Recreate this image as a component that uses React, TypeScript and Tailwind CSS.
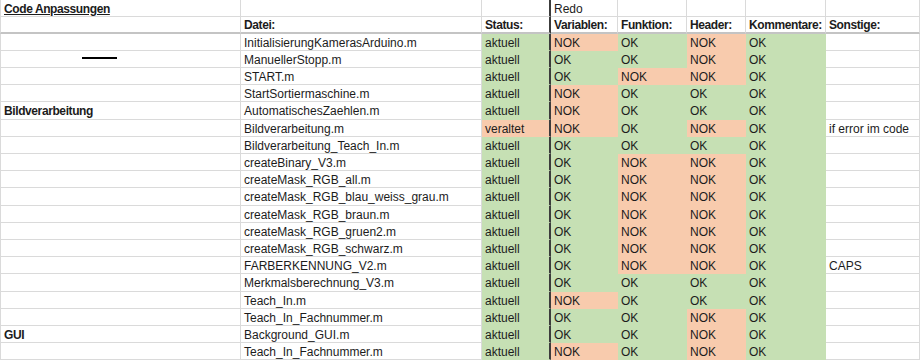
import React from "react";

type Fill = "g" | "o" | null;

type Row = {
  group?: string;
  file: string;
  status: string;
  vals: [string, string, string, string];
  note?: string;
};

const rows: Row[] = [
  { file: "InitialisierungKamerasArduino.m", status: "aktuell", vals: ["NOK", "OK", "NOK", "OK"] },
  { file: "ManuellerStopp.m", status: "aktuell", vals: ["OK", "OK", "NOK", "OK"] },
  { file: "START.m", status: "aktuell", vals: ["OK", "NOK", "NOK", "OK"] },
  { file: "StartSortiermaschine.m", status: "aktuell", vals: ["NOK", "OK", "OK", "OK"] },
  { group: "Bildverarbeitung", file: "AutomatischesZaehlen.m", status: "aktuell", vals: ["NOK", "OK", "OK", "OK"] },
  { file: "Bildverarbeitung.m", status: "veraltet", vals: ["NOK", "OK", "NOK", "OK"], note: "if error im code" },
  { file: "Bildverarbeitung_Teach_In.m", status: "aktuell", vals: ["OK", "OK", "OK", "OK"] },
  { file: "createBinary_V3.m", status: "aktuell", vals: ["OK", "NOK", "NOK", "OK"] },
  { file: "createMask_RGB_all.m", status: "aktuell", vals: ["OK", "NOK", "NOK", "OK"] },
  { file: "createMask_RGB_blau_weiss_grau.m", status: "aktuell", vals: ["OK", "NOK", "NOK", "OK"] },
  { file: "createMask_RGB_braun.m", status: "aktuell", vals: ["OK", "NOK", "NOK", "OK"] },
  { file: "createMask_RGB_gruen2.m", status: "aktuell", vals: ["OK", "NOK", "NOK", "OK"] },
  { file: "createMask_RGB_schwarz.m", status: "aktuell", vals: ["OK", "NOK", "NOK", "OK"] },
  { file: "FARBERKENNUNG_V2.m", status: "aktuell", vals: ["OK", "NOK", "NOK", "OK"], note: "CAPS" },
  { file: "Merkmalsberechnung_V3.m", status: "aktuell", vals: ["OK", "OK", "OK", "OK"] },
  { file: "Teach_In.m", status: "aktuell", vals: ["NOK", "OK", "OK", "OK"] },
  { file: "Teach_In_Fachnummer.m", status: "aktuell", vals: ["OK", "OK", "NOK", "OK"] },
  { group: "GUI", file: "Background_GUI.m", status: "aktuell", vals: ["OK", "OK", "NOK", "OK"] },
  { file: "Teach_In_Fachnummer.m", status: "aktuell", vals: ["NOK", "OK", "NOK", "OK"] },
];

// Spaltenbreiten A..H
const W = ["w-[241px]", "w-[241px]", "w-[69px]", "w-[67px]", "w-[69px]", "w-[59px]", "w-[80px]", "w-[94px]"];

function Cell({
  w,
  fill = null,
  bold,
  children,
  className = "",
}: {
  w: string;
  fill?: Fill;
  bold?: boolean;
  children?: React.ReactNode;
  className?: string;
}) {
  const bg =
    fill === "g"
      ? "bg-[#c6e0b4] border-[#c6e0b4]"
      : fill === "o"
      ? "bg-[#f8cbad] border-[#f8cbad]"
      : "bg-white border-[#dadada]";
  return (
    <div
      className={`${w} ${bg} shrink-0 h-full border-r border-b flex items-center pl-[3px] pt-[1px] whitespace-nowrap overflow-hidden ${
        bold ? "font-bold tracking-[-0.4px]" : ""
      } ${className}`}
    >
      {children}
    </div>
  );
}

export default function App() {
  return (
    <div
      className="relative w-[920px] h-[361px] overflow-hidden bg-white text-[12px] text-[#1c1c1c]"
      style={{ fontFamily: '"Liberation Sans", Arial, sans-serif' }}
    >
      {/* Kopfzeile 1 */}
      <div className="flex h-[17px]">
        <Cell w={W[0]} bold className="border-l">
          <span className="underline">Code Anpassungen</span>
        </Cell>
        <Cell w={W[1]} />
        <Cell w={W[2]} className="border-r-2 border-r-[#3c3c3c]" />
        <Cell w={W[3]}>Redo</Cell>
        <Cell w={W[4]} />
        <Cell w={W[5]} />
        <Cell w={W[6]} />
        <Cell w={W[7]} />
      </div>

      {/* Kopfzeile 2 */}
      <div className="flex h-[17px]">
        <Cell w={W[0]} className="border-l border-b-2 border-b-[#c4c4c4]" />
        <Cell w={W[1]} bold className="border-b-2 border-b-[#c4c4c4]">Datei:</Cell>
        <Cell w={W[2]} bold className="border-r-2 border-r-[#3c3c3c] border-b-2 border-b-[#c4c4c4]">Status:</Cell>
        <Cell w={W[3]} bold className="border-b-2 border-b-[#c4c4c4]">Variablen:</Cell>
        <Cell w={W[4]} bold className="border-b-2 border-b-[#c4c4c4]">Funktion:</Cell>
        <Cell w={W[5]} bold className="border-b-2 border-b-[#c4c4c4]">Header:</Cell>
        <Cell w={W[6]} bold className="border-b-2 border-b-[#c4c4c4]">Kommentare:</Cell>
        <Cell w={W[7]} bold className="border-b-2 border-b-[#c4c4c4]">Sonstige:</Cell>
      </div>

      {rows.map((r, i) => (
        <div key={i} className={`flex ${i % 5 === 4 ? "h-[18px]" : "h-[17px]"}`}>
          <Cell w={W[0]} bold={!!r.group} className="border-l">
            {r.group}
          </Cell>
          <Cell w={W[1]}>{r.file}</Cell>
          <Cell
            w={W[2]}
            fill={r.status === "aktuell" ? "g" : "o"}
            className="border-r-2 border-r-[#3c3c3c]"
          >
            {r.status}
          </Cell>
          {r.vals.map((v, j) => (
            <Cell key={j} w={W[3 + j]} fill={v === "OK" ? "g" : "o"}>
              {v}
            </Cell>
          ))}
          <Cell w={W[7]}>{r.note}</Cell>
        </div>
      ))}

      {/* loser Strich (Zeichnungsobjekt) */}
      <div className="absolute left-[82px] top-[57px] w-[35px] h-[2px] bg-black" />
    </div>
  );
}
